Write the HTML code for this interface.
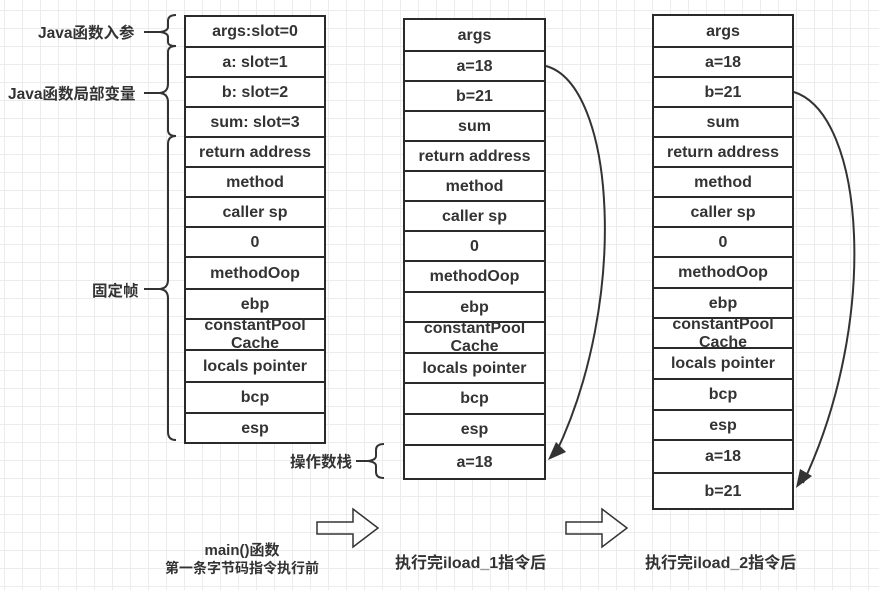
<!DOCTYPE html>
<html><head><meta charset="utf-8"><style>
html,body{margin:0;padding:0}
body{width:879px;height:590px;position:relative;overflow:hidden;background:#fff;
background-image:linear-gradient(#ececec 1px,transparent 1px),linear-gradient(90deg,#ececec 1px,transparent 1px);
background-size:18px 18px;background-position:4px 10px;
font-family:"Liberation Sans","Noto Sans CJK SC",sans-serif;font-weight:bold;color:#333}
.c{position:absolute;box-sizing:border-box;border:2px solid #2a2a2a;background:#fff;display:flex;align-items:center;justify-content:center;text-align:center;font-size:16px;line-height:18px;padding-top:1px}
.t{position:absolute;font-size:15.5px;color:#333;white-space:nowrap}
</style></head><body>
<div id="root"></div>
<svg width="879" height="590" style="position:absolute;left:0;top:0" fill="none" stroke="#333" stroke-width="2">
<path d="M176 15 q-8 0 -8 6 v6 q0 4 -8 5 q8 1 8 5 v5 q0 4 8 4"/>
<path d="M176 46 q-8 0 -8 6 v32 q0 8 -8 9 q8 1 8 9 v28 q0 6 8 6"/>
<path d="M176 136 q-8 0 -8 8 v136 q0 8 -8 9 q8 1 8 9 v134 q0 8 8 8"/>
<path d="M384 444 q-8 0 -8 6 v6 q0 4 -8 5 q8 1 8 5 v6 q0 6 8 6"/>
<path d="M160 32 h-16"/><path d="M160 93 h-16"/><path d="M160 289 h-16"/><path d="M368 461 h-12"/>
<path d="M546 66 C 615 85, 630 300, 555 455"/>
<path d="M794 92 C 865 115, 880 320, 803 483"/>
<path d="M317 522 h36 v-13 l25 19 l-25 19 v-13 h-36 z" stroke-width="1.5"/>
<path d="M566 522 h36 v-13 l25 19 l-25 19 v-13 h-36 z" stroke-width="1.5"/>
</svg>
<svg width="879" height="590" style="position:absolute;left:0;top:0">
<polygon points="548,460 556,442 566,452" fill="#333"/>
<polygon points="796,488 800,469 812,476" fill="#333"/>
</svg>
<div class="t" style="left:38px;top:21px">Java函数入参</div>
<div class="t" style="left:8px;top:82px">Java函数局部变量</div>
<div class="t" style="left:92px;top:279px">固定帧</div>
<div class="t" style="left:290px;top:450px">操作数栈</div>
<div class="t" style="left:142px;width:200px;text-align:center;top:539px;font-size:15px">main()函数</div>
<div class="t" style="left:142px;width:200px;text-align:center;top:558px;font-size:14px">第一条字节码指令执行前</div>
<div class="t" style="left:395px;top:549px;font-size:16px">执行完iload_1指令后</div>
<div class="t" style="left:645px;top:549px;font-size:16px">执行完iload_2指令后</div>
<script>
var cols=[
 {x:184,w:142,rows:[["args:slot=0",15,46],["a: slot=1",46,76],["b: slot=2",76,106],["sum: slot=3",106,136],["return address",136,166],["method",166,196],["caller sp",196,226],["0",226,256],["methodOop",256,288],["ebp",288,318],["constantPool<br>Cache",318,349],["locals pointer",349,381],["bcp",381,412],["esp",412,442]]},
 {x:403,w:143,rows:[["args",18,50],["a=18",50,80],["b=21",80,110],["sum",110,140],["return address",140,170],["method",170,200],["caller sp",200,230],["0",230,260],["methodOop",260,291],["ebp",291,321],["constantPool<br>Cache",321,352],["locals pointer",352,382],["bcp",382,413],["esp",413,444],["a=18",444,478]]},
 {x:652,w:142,rows:[["args",14,46],["a=18",46,76],["b=21",76,106],["sum",106,136],["return address",136,166],["method",166,196],["caller sp",196,226],["0",226,256],["methodOop",256,287],["ebp",287,317],["constantPool<br>Cache",317,347],["locals pointer",347,378],["bcp",378,409],["esp",409,439],["a=18",439,472],["b=21",472,508]]}
];
var h="";
cols.forEach(function(c){c.rows.forEach(function(r){
 h+='<div class="c" style="left:'+c.x+'px;top:'+r[1]+'px;width:'+c.w+'px;height:'+(r[2]-r[1]+2)+'px">'+r[0]+'</div>';});});
document.getElementById("root").innerHTML=h;
</script>
</body></html>
